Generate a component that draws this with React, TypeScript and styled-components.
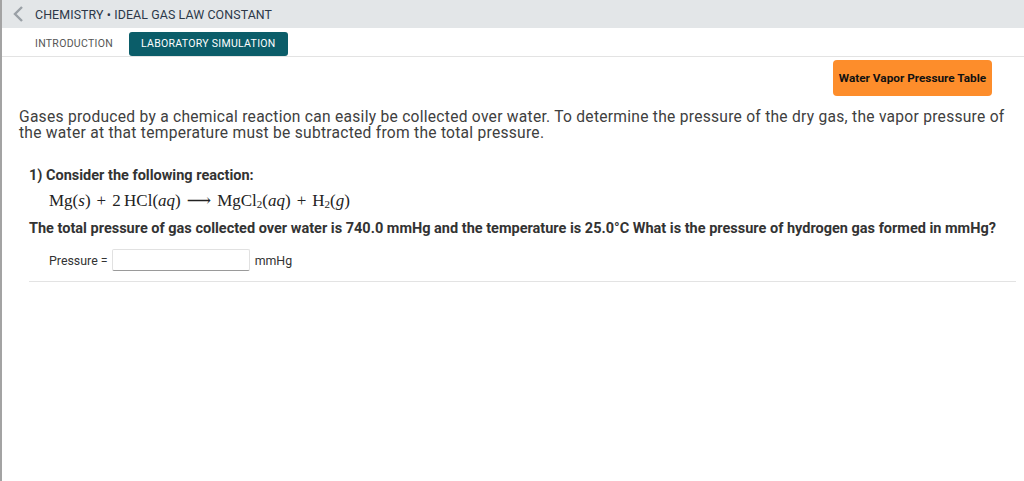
import styled, { createGlobalStyle } from 'styled-components';

const GlobalStyle = createGlobalStyle`
  html, body {
    margin: 0;
    padding: 0;
    background: #fff;
  }
  body {
    font-family: Roboto, "Liberation Sans", Arial, sans-serif;
  }
`;

const Page = styled.div`
  min-height: 481px;
  border-left: 2px solid #a3a3a3;
  box-sizing: border-box;
`;

const TopBar = styled.div`
  height: 28px;
  display: flex;
  align-items: center;
  background: #e3e6e8;
  padding-left: 10px;
`;

const Back = styled.span`
  display: flex;
  width: 14px;
  height: 18px;
  margin-right: 9px;
`;

const Crumb = styled.span`
  font-size: 12.4px;
  color: #2c3848;
  letter-spacing: 0.1px;
`;

const Tabs = styled.div`
  height: 28px;
  display: flex;
  align-items: center;
  gap: 16px;
  padding-left: 33px;
  border-bottom: 1px solid #e3e3e3;
`;

const Tab = styled.button<{ $active?: boolean }>`
  height: 24px;
  padding: 0 ${(p) => (p.$active ? '12px' : '0')};
  border: none;
  border-radius: 3px;
  background: ${(p) => (p.$active ? '#0b5d69' : 'transparent')};
  color: ${(p) => (p.$active ? '#fff' : '#555')};
  font-family: inherit;
  font-size: 10.5px;
  letter-spacing: 0.3px;
  margin-top: 3px;
`;

const Toolbar = styled.div`
  display: flex;
  justify-content: flex-end;
  padding: 3px 32px 0 0;
`;

const OrangeButton = styled.button`
  width: 159px;
  height: 36px;
  padding: 0;
  border: none;
  border-radius: 4px;
  background: #fd8d2b;
  color: #111;
  font-family: inherit;
  font-weight: 700;
  font-size: 11.8px;
`;

const Intro = styled.p`
  margin: 13px 0 0 17px;
  padding-right: 12px;
  font-size: 15.6px;
  letter-spacing: 0.26px;
  line-height: 16px;
  color: #404040;
`;

const Question = styled.div`
  margin: 27px 8px 0 27px;
  border-bottom: 1px solid #e3e3e3;
  padding-bottom: 10px;
`;

const Heading = styled.div`
  font-size: 14.5px;
  font-weight: 700;
  color: #333;
  line-height: 16px;
`;

const Equation = styled.div`
  margin: 8px 0 0 20px;
  font-family: "Liberation Serif", "DejaVu Serif", serif;
  font-size: 17px;
  color: #222;
  line-height: 18px;
  sub {
    font-size: 11px;
    vertical-align: -2px;
    line-height: 0;
  }
`;

const Var = styled.i`
  font-style: italic;
`;

const Op = styled.span`
  margin: 0 6px;
`;

const Prompt = styled.div`
  margin-top: 11px;
  font-size: 14.5px;
  font-weight: 700;
  color: #333;
  line-height: 16px;
`;

const AnswerRow = styled.div`
  display: flex;
  align-items: center;
  gap: 4px;
  margin: 12px 0 0 20px;
  font-size: 12.4px;
  color: #333;
`;

const Field = styled.input`
  width: 138px;
  height: 22px;
  box-sizing: border-box;
  border: 1px solid #e1e1e1;
  border-bottom-color: #9a9a9a;
  border-radius: 2px;
  margin-right: 1px;
`;

const Chevron = () => (
  <svg width="14" height="18" viewBox="0 0 14 18">
    <path d="M10 2 L3 9 L10 16" fill="none" stroke="#9aa0a6" strokeWidth="2.4" />
  </svg>
);

export default function App() {
  return (
    <Page>
      <GlobalStyle />
      <TopBar>
        <Back>
          <Chevron />
        </Back>
        <Crumb>CHEMISTRY • IDEAL GAS LAW CONSTANT</Crumb>
      </TopBar>
      <Tabs>
        <Tab>INTRODUCTION</Tab>
        <Tab $active>LABORATORY SIMULATION</Tab>
      </Tabs>
      <Toolbar>
        <OrangeButton>Water Vapor Pressure Table</OrangeButton>
      </Toolbar>
      <Intro>
        Gases produced by a chemical reaction can easily be collected over water. To determine the pressure of the dry gas, the vapor pressure of the water at that temperature must be subtracted from the total pressure.
      </Intro>
      <Question>
        <Heading>1) Consider the following reaction:</Heading>
        <Equation>
          Mg(<Var>s</Var>)<Op>+</Op>2&thinsp;HCl(<Var>aq</Var>)<Op>⟶</Op>MgCl<sub>2</sub>(<Var>aq</Var>)
          <Op>+</Op>H<sub>2</sub>(<Var>g</Var>)
        </Equation>
        <Prompt>
          The total pressure of gas collected over water is 740.0 mmHg and the temperature is 25.0°C What is the pressure of hydrogen gas formed in mmHg?
        </Prompt>
        <AnswerRow>
          Pressure =<Field type="text" />mmHg
        </AnswerRow>
      </Question>
    </Page>
  );
}
